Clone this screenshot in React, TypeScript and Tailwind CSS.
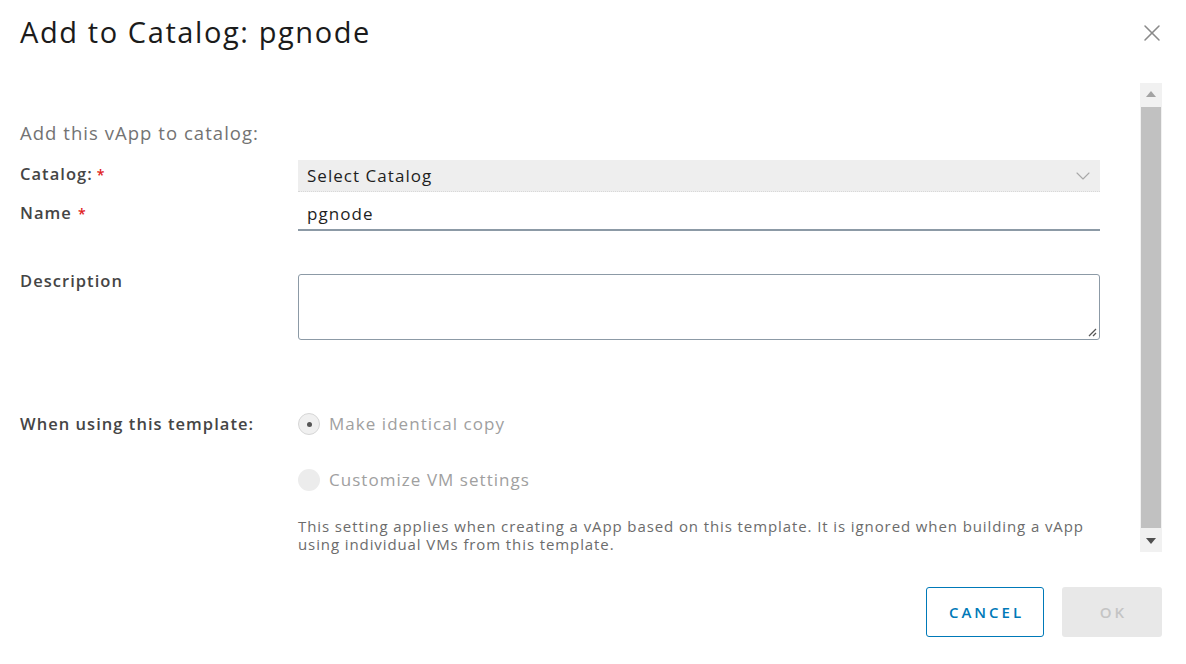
import { X, ChevronDown } from 'lucide-react';

export default function App() {
  return (
    <div className="w-[1186px] h-[664px] bg-white flex flex-col text-[#333] font-['Open_Sans',sans-serif] overflow-hidden">
      {/* header */}
      <div className="h-[83px] flex items-start justify-between pl-5 pr-[20px] pt-[12px]">
        <h1 className="text-[29px] leading-[40px] text-[#1b1b1b] tracking-[0.055em]">Add to Catalog: pgnode</h1>
        <button className="mt-[7px] text-[#8a8a8a]">
          <X className="w-[28px] h-[28px]" strokeWidth={1.3} />
        </button>
      </div>

      {/* body */}
      <div className="h-[469px] flex pr-[24px]">
        <div className="flex-1 pl-5 pr-[40px] pt-[39px] tracking-[0.065em]">
          <p className="text-[18.5px] leading-[22px] text-[#737373]">Add this vApp to catalog:</p>

          <div className="grid grid-cols-[278px_1fr] mt-[16px]">
            <div className="h-[28px] flex items-center text-[16.5px] font-semibold text-[#454545]">
              Catalog:<span className="text-[#e02020] ml-[4px] text-[14px]">*</span>
            </div>
            <div className="h-[32px] bg-[#eeeeee] border-b border-dotted border-[#d8d8d8] flex items-center justify-between pl-[9px] pr-[5px]">
              <span className="text-[17px] text-[#1e1e1e]">Select Catalog</span>
              <ChevronDown className="w-[24px] h-[24px] text-[#a8a8a8]" strokeWidth={1.1} />
            </div>

            <div className="h-[30px] mt-[6px] flex items-center text-[16.5px] font-semibold text-[#454545]">
              Name<span className="text-[#e02020] ml-[6px] text-[14px]">*</span>
            </div>
            <div className="h-[33px] mt-[6px] border-b-2 border-[#8c9aa6] flex items-center pl-[9px]">
              <span className="text-[17px] text-[#1e1e1e]">pgnode</span>
            </div>

            <div className="mt-[44px] text-[16.5px] font-semibold text-[#454545] leading-[12px]">Description</div>
            <div className="mt-[43px] relative h-[66px] border border-[#8c9aa6] rounded-[3px]">
              <svg className="absolute right-[2px] bottom-[2px]" width="10" height="10" viewBox="0 0 10 10">
                <path d="M9 2 L2 9 M9 6 L6 9" stroke="#555" strokeWidth="1.3" />
              </svg>
            </div>

            <div className="mt-[73px] h-[22px] flex items-center text-[16.5px] font-semibold text-[#454545]">When using this template:</div>
            <div className="mt-[73px] flex flex-col">
              <div className="h-[22px] flex items-center">
                <span className="w-[22px] h-[22px] rounded-full bg-[#f0f0f0] border border-[#d6d6d6] flex items-center justify-center">
                  <span className="w-[5px] h-[5px] rounded-full bg-[#555]" />
                </span>
                <span className="ml-[9px] text-[17px] text-[#a0a0a0]">Make identical copy</span>
              </div>
              <div className="h-[22px] mt-[34px] flex items-center">
                <span className="w-[22px] h-[22px] rounded-full bg-[#ececec]" />
                <span className="ml-[9px] text-[17px] text-[#a0a0a0]">Customize VM settings</span>
              </div>
              <p className="mt-[26px] text-[15px] leading-[18px] text-[#6c6c6c] tracking-[0.06em]">
                This setting applies when creating a vApp based on this template. It is ignored when building a vApp using individual VMs from this template.
              </p>
            </div>
          </div>
        </div>

        {/* scrollbar */}
        <div className="w-[22px] bg-[#f1f1f1] flex flex-col items-center">
          <div className="h-[22px] flex items-center justify-center">
            <svg width="10" height="6" viewBox="0 0 10 6"><path d="M5 0 L10 6 L0 6 Z" fill="#a3a3a3" /></svg>
          </div>
          <div className="flex-1 w-[20px] bg-[#c1c1c1] my-[2px]" />
          <div className="h-[22px] flex items-center justify-center">
            <svg width="10" height="6" viewBox="0 0 10 6"><path d="M0 0 L10 0 L5 6 Z" fill="#505050" /></svg>
          </div>
        </div>
      </div>

      {/* footer */}
      <div className="flex justify-end gap-[18px] pr-[24px] pt-[35px]">
        <button className="w-[118px] h-[50px] border border-[#0079b8] rounded-[3px] text-[#0079b8] text-[15px] font-semibold tracking-[3px] pl-[3px]">
          CANCEL
        </button>
        <button className="w-[100px] h-[50px] rounded-[3px] bg-[#e8e8e8] text-[#c4c4c4] text-[15px] font-semibold tracking-[3px] pl-[3px]">
          OK
        </button>
      </div>
    </div>
  );
}
